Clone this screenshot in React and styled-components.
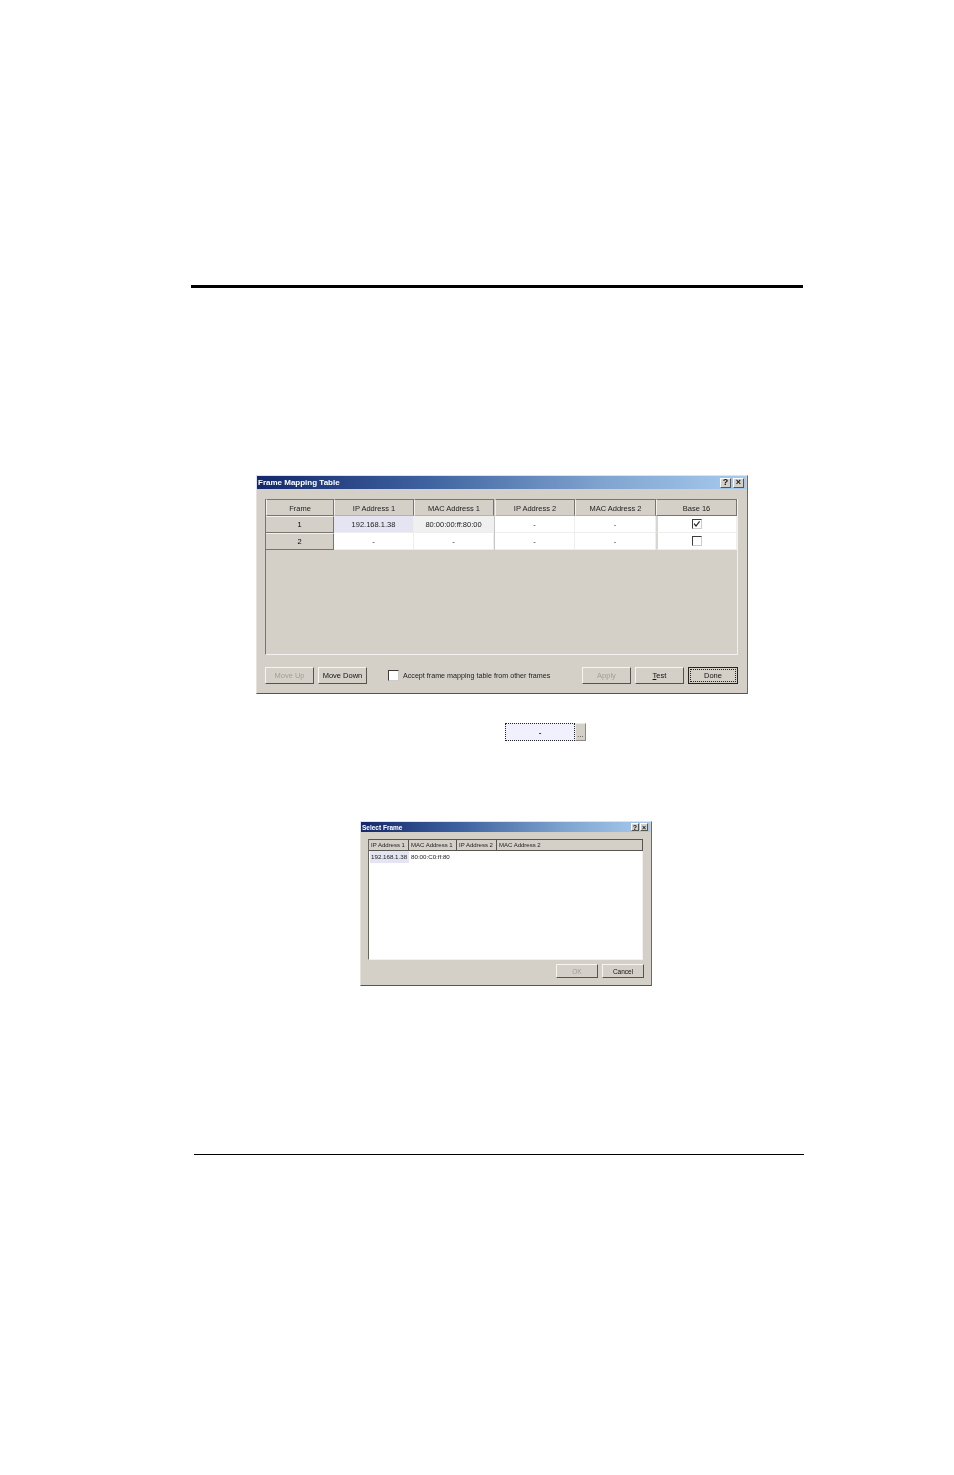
import React from "react";
import styled, { createGlobalStyle, css } from "styled-components";

const GlobalStyle = createGlobalStyle`
  html, body {
    margin: 0;
    padding: 0;
    background: #ffffff;
  }
  body {
    font-family: "Liberation Sans", Arial, sans-serif;
    color: #222;
  }
`;

const Page = styled.div`
  width: 954px;
  height: 1475px;
  display: flow-root;
  overflow: hidden;
`;

const Rule = styled.hr`
  border: 0;
  margin: ${(p) => p.$top}px 0 0 ${(p) => p.$left}px;
  width: ${(p) => p.$width}px;
  height: ${(p) => p.$height}px;
  background: #000;
`;

const Dialog = styled.section`
  box-sizing: border-box;
  width: ${(p) => p.$width}px;
  height: ${(p) => p.$height}px;
  margin: ${(p) => p.$top}px 0 0 ${(p) => p.$left}px;
  padding: 0 1px 1px 0;
  display: flex;
  flex-direction: column;
  background: #d4d0c8;
  border-top: 1px solid #e4e2dc;
  border-left: 1px solid #e4e2dc;
  border-right: 1px solid #6a6a64;
  border-bottom: 1px solid #55554f;
  filter: blur(0.3px);
`;

const TitleBar = styled.header`
  flex: none;
  height: ${(p) => (p.$small ? 10 : 13)}px;
  display: flex;
  align-items: center;
  padding: 0 2px 0 1px;
  background: linear-gradient(90deg, #13286c 0%, #3f63a0 35%, #7ea3cf 70%, #a7cbee 100%);
`;

const Title = styled.span`
  flex: 1;
  font-size: ${(p) => (p.$small ? 6.5 : 8)}px;
  font-weight: 700;
  color: #fff;
  white-space: nowrap;
`;

const TitleButton = styled.span`
  box-sizing: border-box;
  width: ${(p) => (p.$small ? 8 : 11)}px;
  height: ${(p) => (p.$small ? 8 : 10)}px;
  margin-left: ${(p) => (p.$small ? 1 : 2)}px;
  display: flex;
  align-items: center;
  justify-content: center;
  background: #d4d0c8;
  border: 1px solid;
  border-color: #fff #55554f #55554f #fff;
  font-size: ${(p) => (p.$small ? 7 : 9)}px;
  font-weight: 700;
  line-height: 1;
  color: #111;
`;

const Body = styled.div`
  flex: 1;
  display: flex;
  flex-direction: column;
  padding: ${(p) => p.$padding};
`;

const TablePanel = styled.div`
  box-sizing: border-box;
  height: 156px;
  border-right: 1px solid #f2f1ed;
  border-bottom: 1px solid #f2f1ed;
  border-left: 1px solid #77756f;
  display: grid;
  grid-template-columns: 68px 80px 80px 1px 80px 81px 81px;
  grid-template-rows: 17px 17px 17px;
  align-content: start;
`;

const cellText = css`
  display: flex;
  align-items: center;
  justify-content: center;
  font-size: 7.5px;
  white-space: nowrap;
`;

const HeadCell = styled.div`
  ${cellText}
  box-sizing: border-box;
  padding-top: 1px;
  color: #222;
  background: #d4d0c8;
  border-top: 1px solid #77756f;
  border-left: 1px solid #f2f1ed;
  border-right: 1px solid #77756f;
  border-bottom: 1px solid ${(p) => (p.$soft ? "#b4b2ac" : "#77756f")};
`;

const RowHead = styled(HeadCell)`
  padding-top: 0;
  color: #000;
  border-top-color: #f2f1ed;
  border-left: 0;
`;

const Cell = styled.div`
  ${cellText}
  box-sizing: border-box;
  color: #222;
  background: ${(p) => p.$bg || "#fff"};
  border-right: 1px solid #eeeeee;
  border-bottom: 1px solid #eeeeee;
  border-left: ${(p) => (p.$thick ? "2px solid #d8d6d0" : "0")};
`;

const Divider = styled.div`
  background: #c9c6be;
`;

const CheckBox = styled.span`
  box-sizing: border-box;
  flex: none;
  width: ${(p) => p.$size}px;
  height: ${(p) => p.$size}px;
  display: flex;
  background: #fff;
  border-top: 1px solid #3c3c38;
  border-left: 1px solid #3c3c38;
  border-right: 1px solid #ccc;
  border-bottom: 1px solid #ccc;
`;

const Footer = styled.div`
  margin-top: 12px;
  display: flex;
  align-items: center;
  height: 17px;
`;

const Button = styled.button`
  box-sizing: border-box;
  width: ${(p) => p.$width}px;
  height: ${(p) => p.$height || 17}px;
  margin-left: ${(p) => p.$gap || 0}px;
  padding: 0;
  background: #d4d0c8;
  border: 1px solid;
  border-color: ${(p) => (p.$focused ? "#222" : "#f6f5f1 #55554f #55554f #f6f5f1")};
  font-family: inherit;
  font-size: ${(p) => p.$font || 7.5}px;
  color: ${(p) => (p.disabled ? "#a09e98" : "#111")};
`;

const FocusLabel = styled.span`
  display: flex;
  align-items: center;
  justify-content: center;
  box-sizing: border-box;
  height: calc(100% - 2px);
  margin: 1px;
  border: 1px dotted #222;
`;

const Underlined = styled.span`
  text-decoration: underline;
`;

const AcceptRow = styled.label`
  flex: 1;
  display: flex;
  align-items: center;
  gap: 4px;
  margin-left: 21px;
  font-size: 7.15px;
  color: #222;
  white-space: nowrap;
`;

const FieldRow = styled.div`
  box-sizing: border-box;
  width: 81px;
  height: 18px;
  margin: 29px 0 0 505px;
  display: flex;
  filter: blur(0.3px);
`;

const FieldInput = styled.div`
  flex: 1;
  display: flex;
  align-items: center;
  justify-content: center;
  background: #f1f1fe;
  border: 1px dotted #222;
  font-size: 8px;
  font-weight: 700;
  color: #222;
`;

const FieldButton = styled.div`
  box-sizing: border-box;
  width: 11px;
  display: flex;
  align-items: flex-end;
  justify-content: center;
  padding-bottom: 1px;
  background: #d4d0c8;
  border: 1px solid;
  border-color: #eceae5 #8a8882 #8a8882 #eceae5;
  font-size: 7.5px;
  line-height: 8px;
  color: #222;
`;

const ListView = styled.div`
  box-sizing: border-box;
  height: 121px;
  background: #fff;
  border-top: 1px solid #66645e;
  border-left: 1px solid #66645e;
  border-right: 1px solid #f2f1ed;
  border-bottom: 1px solid #f2f1ed;
`;

const ListHead = styled.div`
  height: 10px;
  display: flex;
  background: #d4d0c8;
  border-top: 1px solid #55554f;
  border-right: 1px solid #55554f;
  border-bottom: 1px solid #55554f;
  margin: -1px -1px 0 0;
`;

const ListHeadCell = styled.div`
  box-sizing: border-box;
  width: ${(p) => p.$width}px;
  padding-left: 2px;
  font-size: 6px;
  line-height: 10px;
  color: #222;
  border-right: ${(p) => (p.$last ? "0" : "1px solid #55554f")};
  white-space: nowrap;
`;

const ListRow = styled.div`
  height: 12px;
  display: flex;
`;

const ListCell = styled.div`
  box-sizing: border-box;
  width: ${(p) => p.$width}px;
  margin-left: ${(p) => p.$inset || 0}px;
  padding-left: ${(p) => (p.$inset ? 1 : 2)}px;
  font-size: 6.2px;
  line-height: 12px;
  color: #222;
  background: ${(p) => p.$bg || "transparent"};
  white-space: nowrap;
`;

const SmallFooter = styled.div`
  margin: 4px -1px 0 0;
  display: flex;
  justify-content: flex-end;
`;

const columns = ["IP Address 1", "MAC Address 1", "IP Address 2", "MAC Address 2", "Base 16"];

const Check = () => (
  <svg width="8" height="8" viewBox="0 0 8 8">
    <path d="M1 3.6 L3 6 L6.6 1.4" fill="none" stroke="#222" strokeWidth="1.2" />
  </svg>
);

const FrameTable = () => (
  <TablePanel>
    <HeadCell>Frame</HeadCell>
    <HeadCell $soft>{columns[0]}</HeadCell>
    <HeadCell $soft>{columns[1]}</HeadCell>
    <Divider />
    <HeadCell $soft>{columns[2]}</HeadCell>
    <HeadCell $soft>{columns[3]}</HeadCell>
    <HeadCell>{columns[4]}</HeadCell>

    <RowHead>1</RowHead>
    <Cell $bg="#e4e4f2">192.168.1.38</Cell>
    <Cell $bg="#f0f0f0">80:00:00:ff:80:00</Cell>
    <Divider />
    <Cell>-</Cell>
    <Cell>-</Cell>
    <Cell $thick>
      <CheckBox $size={10}>
        <Check />
      </CheckBox>
    </Cell>

    <RowHead>2</RowHead>
    <Cell>-</Cell>
    <Cell>-</Cell>
    <Divider />
    <Cell>-</Cell>
    <Cell>-</Cell>
    <Cell $thick>
      <CheckBox $size={10} />
    </Cell>
  </TablePanel>
);

export default function App() {
  return (
    <Page>
      <GlobalStyle />
      <Rule $top={285} $left={191} $width={612} $height={3} />

      <Dialog $width={492} $height={219} $top={187} $left={256}>
        <TitleBar>
          <Title>Frame Mapping Table</Title>
          <TitleButton>?</TitleButton>
          <TitleButton>×</TitleButton>
        </TitleBar>
        <Body $padding="10px 8px 0 8px">
          <FrameTable />
          <Footer>
            <Button disabled $width={49}>Move Up</Button>
            <Button $width={49} $gap={4}>Move Down</Button>
            <AcceptRow>
              <CheckBox $size={11} />
              Accept frame mapping table from other frames
            </AcceptRow>
            <Button disabled $width={49}>Apply</Button>
            <Button $width={49} $gap={4}>
              <Underlined>T</Underlined>est
            </Button>
            <Button $width={50} $gap={4} $focused>
              <FocusLabel>Done</FocusLabel>
            </Button>
          </Footer>
        </Body>
      </Dialog>

      <FieldRow>
        <FieldInput>-</FieldInput>
        <FieldButton>...</FieldButton>
      </FieldRow>

      <Dialog $width={292} $height={165} $top={80} $left={360}>
        <TitleBar $small>
          <Title $small>Select Frame</Title>
          <TitleButton $small>?</TitleButton>
          <TitleButton $small>×</TitleButton>
        </TitleBar>
        <Body $padding="7px 7px 0 7px">
          <ListView>
            <ListHead>
              <ListHeadCell $width={40}>IP Address 1</ListHeadCell>
              <ListHeadCell $width={48}>MAC Address 1</ListHeadCell>
              <ListHeadCell $width={40}>IP Address 2</ListHeadCell>
              <ListHeadCell $last $width={60}>MAC Address 2</ListHeadCell>
            </ListHead>
            <ListRow>
              <ListCell $inset={1} $width={39} $bg="#e4e4f2">192.168.1.38</ListCell>
              <ListCell $width={43}>80:00:C0:ff:80</ListCell>
            </ListRow>
          </ListView>
          <SmallFooter>
            <Button disabled $width={42} $height={14} $font={6.5}>OK</Button>
            <Button $width={42} $height={14} $gap={4} $font={6.5}>Cancel</Button>
          </SmallFooter>
        </Body>
      </Dialog>

      <Rule $top={168} $left={194} $width={610} $height={1} />
    </Page>
  );
}
